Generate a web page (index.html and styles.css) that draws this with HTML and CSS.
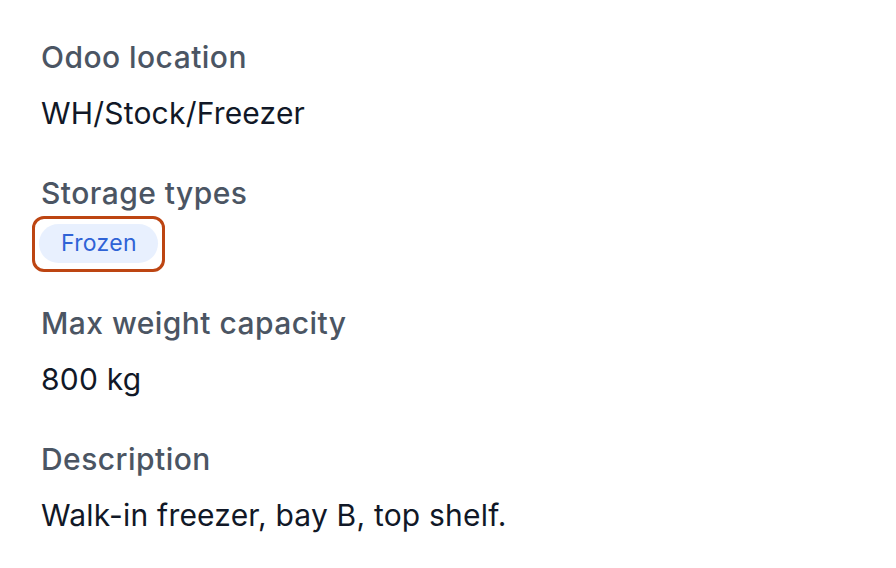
FILE: index.html
```html
<!DOCTYPE html>
<html lang="en">
<head>
  <meta charset="UTF-8" />
  <meta name="viewport" content="width=device-width, initial-scale=1.0"/>
  <title>Location details</title>
  <link rel="stylesheet" href="styles.css">
</head>
<body>

<main class="details">
  <div class="field">
    <div class="label">Odoo location</div>
    <div class="value">WH/Stock/Freezer</div>
  </div>

  <div class="field">
    <div class="label">Storage types</div>
    <div class="chips">
      <span class="chip highlighted">Frozen</span>
    </div>
  </div>

  <div class="field">
    <div class="label">Max weight capacity</div>
    <div class="value">800 kg</div>
  </div>

  <div class="field">
    <div class="label">Description</div>
    <div class="value">Walk-in freezer, bay B, top shelf.</div>
  </div>
</main>

</body>
</html>
```

FILE: styles.css
```css
body {
  font-family: Inter, 'Noto Sans', sans-serif;
  margin: 0;
  background: #fff;
  color: #111827;
}
.details {
  padding: 37px 41px;
  display: flex;
  flex-direction: column;
  gap: 40px;
}
.field {
  display: flex;
  flex-direction: column;
}
.label {
  font-size: 30px;
  font-weight: 500;
  line-height: 40px;
  letter-spacing: 0.45px;
  color: #4b5563;
}
.value {
  font-size: 30px;
  line-height: 40px;
  letter-spacing: 0.2px;
  margin-top: 16px;
  color: #111827;
}
.chips {
  display: flex;
  gap: 8px;
  margin: 11px 0 0 -2px;
}
.chip {
  position: relative;
  display: inline-block;
  font-size: 23px;
  line-height: 31px;
  letter-spacing: 0.3px;
  padding: 4px 21px 4px 22px;
  border-radius: 20px;
  background: #e8f0fe;
  color: #2f63d6;
}
.chip.highlighted::after {
  content: "";
  position: absolute;
  top: -8px;
  bottom: -9px;
  left: -7px;
  right: -7px;
  border: 3px solid #bd4512;
  border-radius: 12px;
}
```
